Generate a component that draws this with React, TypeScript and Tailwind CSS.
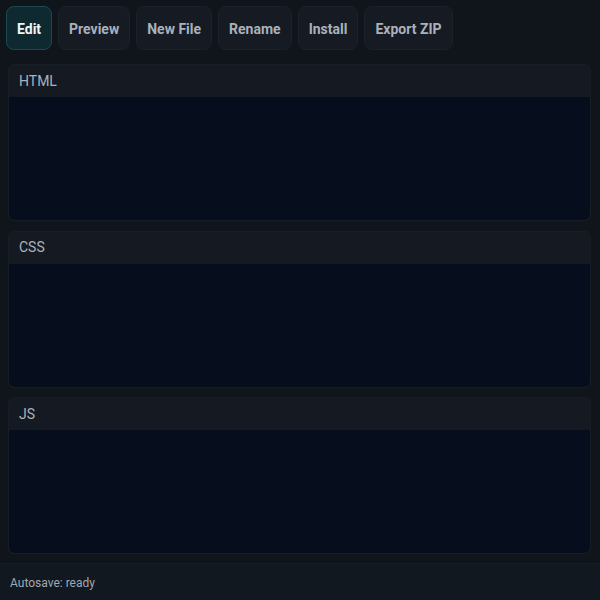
import React from "react";

const buttons = ["Preview", "New File", "Rename", "Install", "Export ZIP"];

function Panel({ label }: { label: string }) {
  return (
    <div className="flex-1 flex flex-col rounded-md bg-[#151a22] border border-[#171d25] overflow-hidden">
      <div className="h-[32px] shrink-0 flex items-center px-[10px] text-[14px] text-[#aab2bd]">
        {label}
      </div>
      <div className="flex-1 bg-[#060e1e] rounded-b-md" />
    </div>
  );
}

export default function App() {
  return (
    <div
      className="w-[600px] h-[600px] flex flex-col bg-[#10151c] overflow-hidden"
      style={{ fontFamily: "Roboto, 'Liberation Sans', sans-serif" }}
    >
      <div className="h-[56px] shrink-0 flex items-start gap-[6px] pt-[6px] px-[6px]">
        <button className="h-[44px] pt-[2px] px-[10px] rounded-lg border border-[#1c4a52] bg-[#0e2930] text-[14px] font-bold text-[#eef5f6]">
          Edit
        </button>
        {buttons.map((b) => (
          <button
            key={b}
            className="h-[44px] pt-[2px] px-[10px] rounded-lg border border-[#1b2129] bg-[#161b23] text-[14px] font-bold text-[#a9b1bc]"
          >
            {b}
          </button>
        ))}
      </div>
      <div className="flex-1 flex flex-col gap-[9.5px] pt-[8px] pb-[9px] pl-[8px] pr-[9px]">
        <Panel label="HTML" />
        <Panel label="CSS" />
        <Panel label="JS" />
      </div>
      <div className="h-[37px] shrink-0 flex items-center pt-[2px] px-[10px] bg-[#121820] border-t border-[#161c24] text-[12px] text-[#a0a8b2]">
        Autosave: ready
      </div>
    </div>
  );
}
